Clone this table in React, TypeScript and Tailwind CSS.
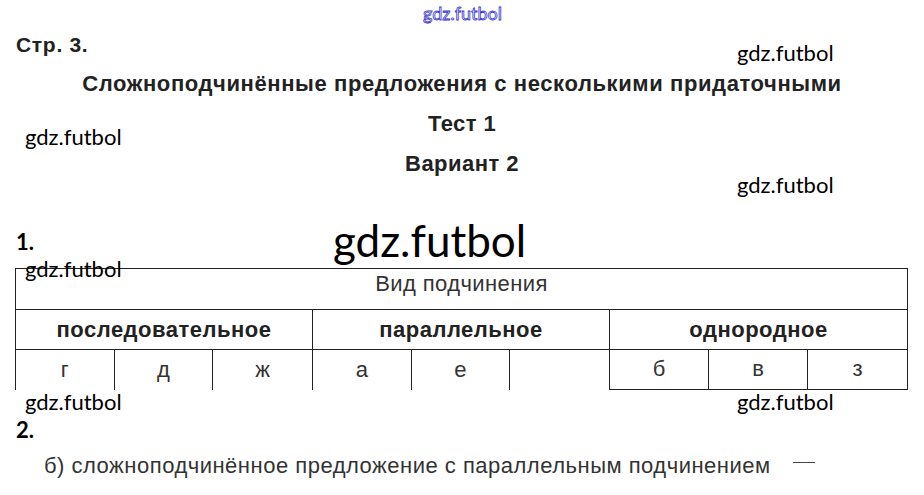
export default function App() {
  const groups = [
    { title: "последовательное", cells: ["г", "д", "ж"] },
    { title: "параллельное", cells: ["а", "е", ""] },
    { title: "однородное", cells: ["б", "в", "з"] },
  ];

  const mark = "absolute leading-[30px] text-[22px] font-['Lato',sans-serif] text-black";

  return (
    <div className="relative w-[924px] h-[495px] bg-white overflow-hidden text-[#222] font-['Liberation_Sans',Arial,sans-serif]">
      {/* header */}
      <div className="h-[30px]" />
      <div className="h-[30px] leading-[30px] pl-[16px] text-[21px] font-bold tracking-[0.7px]">Стр. 3.</div>
      <div className="mt-[9px] h-[30px] leading-[30px] text-center text-[22px] font-bold tracking-[0.6px]">
        Сложноподчинённые предложения с несколькими придаточными
      </div>
      <div className="mt-[10px] h-[30px] leading-[30px] text-center text-[22px] font-bold tracking-[0.4px]">Тест 1</div>
      <div className="mt-[10px] h-[30px] leading-[30px] text-center text-[22px] font-bold tracking-[0.45px]">Вариант 2</div>

      {/* task 1 */}
      <div className="mt-[48px] h-[30px] leading-[30px] pl-[16px] text-[22px] font-bold font-['Lato',sans-serif] text-black">1.</div>
      <div className="mt-[11px] ml-[15px] w-[893px] border-l border-t border-r border-[#222]">
        <div className="h-[41px] border-b border-[#222] text-center text-[22px] tracking-[0.4px] text-[#333] leading-[30px]">
          Вид подчинения
        </div>
        <div className="grid grid-cols-3">
          {groups.map((g, i) => (
            <div key={g.title} className={i < 2 ? "border-r border-[#222]" : ""}>
              <div className="h-[40px] border-b border-[#222] flex items-center justify-center text-[22px] font-bold tracking-[0.5px]">
                {g.title}
              </div>
              <div className="grid grid-cols-3">
                {g.cells.map((c, j) => (
                  <div
                    key={j}
                    className={
                      "h-[40px] pb-[2px] flex items-center justify-center text-[22px] text-[#333] " +
                      (j < 2 ? "border-r border-[#222] " : "") +
                      (i === 2 ? "border-b border-[#222]" : "")
                    }
                  >
                    {c}
                  </div>
                ))}
              </div>
            </div>
          ))}
        </div>
      </div>

      {/* task 2 */}
      <div className="mt-[25px] h-[30px] leading-[30px] pl-[16px] text-[22px] font-bold font-['Lato',sans-serif] text-black">2.</div>
      <div className="mt-[6px] h-[30px] leading-[30px] pl-[44px] text-[22px] tracking-[0.5px] text-[#333] flex items-center">
        <span>б) сложноподчинённое предложение с параллельным подчинением</span>
        <span className="ml-[22px] -mt-[8px] w-[22px] h-[1px] bg-[#444]" />
      </div>

      {/* watermarks */}
      <div className="absolute left-[423px] top-[-2px] leading-[30px] text-[18px] font-['Lato',sans-serif] text-transparent [-webkit-text-stroke:0.8px_#3434d0]">
        gdz.futbol
      </div>
      <div className={mark + " left-[737px] top-[38px]"}>gdz.futbol</div>
      <div className={mark + " left-[25px] top-[122px]"}>gdz.futbol</div>
      <div className={mark + " left-[737px] top-[170px]"}>gdz.futbol</div>
      <div className="absolute left-[333px] top-[210px] leading-[60px] text-[44px] font-['Lato',sans-serif] text-black">gdz.futbol</div>
      <div className={mark + " left-[25px] top-[254px]"}>gdz.futbol</div>
      <div className={mark + " left-[25px] top-[387px]"}>gdz.futbol</div>
      <div className={mark + " left-[737px] top-[387px]"}>gdz.futbol</div>
    </div>
  );
}
